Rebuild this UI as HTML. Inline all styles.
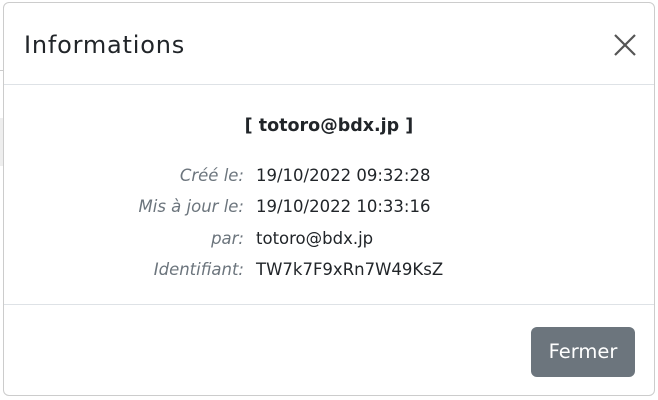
<!DOCTYPE html>
<html><head><style>
body{margin:0;width:658px;height:400px;background:#fff;font-family:"DejaVu Sans","Liberation Sans",sans-serif;position:relative;overflow:hidden;color:#212529}
.bg1{position:absolute;left:0;top:70px;width:4px;height:1px;background:#ccc}
.bg2{position:absolute;left:0;top:118px;width:4px;height:48px;background:#eee}
.modal{position:absolute;left:3px;top:2px;width:652px;height:394px;border:1px solid #ccc;border-radius:6px;background:#fff;box-sizing:border-box}
.title{position:absolute;left:20px;top:27px;font-size:24px;letter-spacing:0.8px;line-height:30px}
.close{position:absolute;left:610px;top:31px}
.hr{position:absolute;left:0;width:100%;height:1px;background:#dee2e6}
.h{position:absolute;left:0;width:100%;top:111px;text-align:center;font-weight:bold;font-size:17.5px;line-height:24px}
.row{position:absolute;left:0;width:100%;font-size:16.5px;line-height:22px}
.l{position:absolute;right:410px;color:#6c757d;font-style:italic}
.v{position:absolute;left:252px}
.btn{position:absolute;left:527px;top:324px;width:104px;height:50px;border-radius:6px;background:#6c757d;color:#fff;font-size:19.5px;line-height:50px;text-align:center}
</style></head><body>
<div class="bg1"></div><div class="bg2"></div>
<div class="modal">
<div class="title">Informations</div>
<svg class="close" width="22" height="22" viewBox="0 0 22 22"><path d="M1 1L21 21M21 1L1 21" stroke="#555" stroke-width="2.2"/></svg>
<div class="hr" style="top:81px"></div>
<div class="h">[ totoro@bdx.jp ]</div>
<div class="row" style="top:162px"><span class="l">Créé le:</span><span class="v">19/10/2022 09:32:28</span></div>
<div class="row" style="top:193px"><span class="l">Mis à jour le:</span><span class="v">19/10/2022 10:33:16</span></div>
<div class="row" style="top:225px"><span class="l">par:</span><span class="v">totoro@bdx.jp</span></div>
<div class="row" style="top:256px"><span class="l">Identifiant:</span><span class="v">TW7k7F9xRn7W49KsZ</span></div>
<div class="hr" style="top:301px"></div>
<div class="btn">Fermer</div>
</div>
</body></html>
